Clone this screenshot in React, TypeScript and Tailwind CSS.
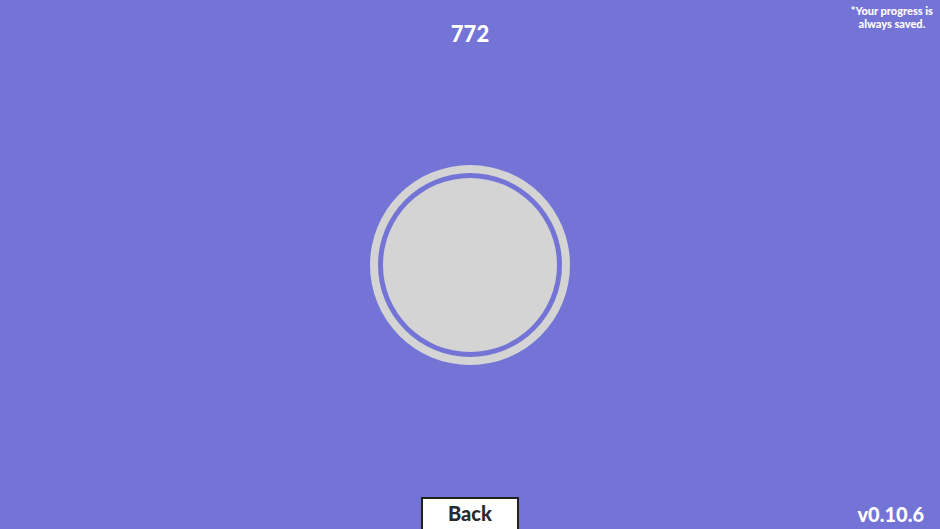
export default function App() {
  return (
    <div
      className="relative flex h-[529px] w-[940px] flex-col overflow-hidden bg-[#7474d6] text-white"
      style={{ fontFamily: "Lato, 'Noto Sans', sans-serif" }}
    >
      {/* score */}
      <div className="flex h-[70px] justify-center pt-[20px]">
        <span className="text-[22px] font-black leading-[28px]">772</span>
      </div>

      {/* corner note */}
      <div className="absolute right-[7px] top-[4px] text-center text-[11px] font-black leading-[13px]">
        *Your progress is
        <br />
        always saved.
      </div>

      {/* clicker */}
      <div className="flex flex-1 items-start justify-center pt-[95px]">
        <button className="flex h-[200px] w-[200px] rounded-full bg-[#d4d4d4] p-[8px]">
          <span className="flex flex-1 rounded-full bg-[#7474d6] p-[5px]">
            <span className="flex-1 rounded-full bg-[#d4d4d4]" />
          </span>
        </button>
      </div>

      {/* bottom bar */}
      <div className="grid h-[33px] grid-cols-3 items-end">
        <div />
        <div className="flex justify-center">
          <button className="h-[34px] w-[98px] translate-y-[1px] border-2 border-[#222] bg-white pb-[3px] text-[20px] font-black leading-[26px] text-[#2a2a2a]">
            Back
          </button>
        </div>
        <div className="flex justify-end pb-[4px] pr-[16px]">
          <span className="text-[20px] font-black leading-[24px]">v0.10.6</span>
        </div>
      </div>
    </div>
  );
}
